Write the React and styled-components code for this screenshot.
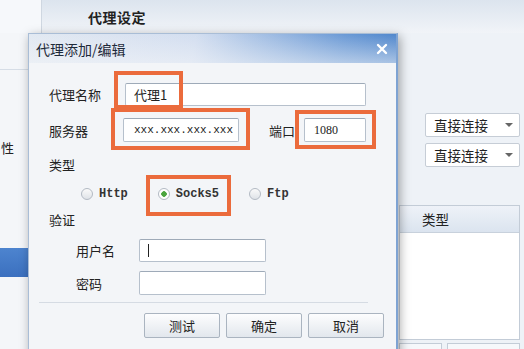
import styled, { createGlobalStyle } from 'styled-components'

const Global = createGlobalStyle`
  html, body { margin: 0; padding: 0; }
  body { font-family: "Noto Sans CJK SC", "Noto Sans", sans-serif; color: #222; }
`

const Page = styled.div`
  position: relative;
  width: 524px;
  height: 349px;
  overflow: hidden;
  background: #eef2f7;
  display: flex;
  flex-direction: column;
`

const Header = styled.header`
  height: 33px;
  flex: none;
  display: flex;
  align-items: center;
  background: linear-gradient(#dce4ee, #f1f4f8);
`

const HeaderCorner = styled.div`
  width: 42px;
  height: 100%;
  background: #f6f8fb;
  border-right: 1px solid #cfd7e1;
  box-sizing: border-box;
`

const HeaderTitle = styled.h1`
  margin: 0 0 0 46px;
  font-size: 14px;
  font-weight: 700;
  letter-spacing: 0.5px;
`

const Body = styled.div`
  flex: 1;
  display: flex;
`

const Sidebar = styled.nav`
  width: 28px;
  flex: none;
  background: #f4f6f9;
  border-right: 1px solid #c5ced9;
  overflow: hidden;
  display: flex;
  flex-direction: column;
`

const SideItem = styled.div`
  height: ${p => p.h}px;
  flex: none;
  display: flex;
  align-items: center;
  padding-left: 1px;
  font-size: 13px;
  white-space: nowrap;
  background: ${p => p.active ? 'linear-gradient(#4d84cf, #3b70bf)' : 'transparent'};
  border-bottom: ${p => p.line ? '1px solid #d6dde6' : 'none'};
  box-sizing: border-box;
`

const Main = styled.main`
  flex: 1;
  display: flex;
  justify-content: flex-end;
  padding-right: 4px;
`

const RightCol = styled.div`
  width: 121px;
  padding-top: 80px;
  display: flex;
  flex-direction: column;
`

const Select = styled.div`
  margin: 0 0 6px 26px;
  height: 24px;
  background: #fff;
  border: 1px solid #c6cdd6;
  border-radius: 2px;
  box-sizing: border-box;
  display: flex;
  align-items: center;
  justify-content: space-between;
  padding: 0 6px 0 8px;
  font-size: 13.5px;
  &::after {
    content: '';
    border-left: 4px solid transparent;
    border-right: 4px solid transparent;
    border-top: 4px solid #666;
  }
`

const Table = styled.div`
  margin-top: 32px;
  border: 1px solid #c3ccd7;
  background: #fff;
`

const TableHead = styled.div`
  height: 26px;
  background: linear-gradient(#eef2f8, #dbe4ef);
  border-bottom: 1px solid #c8d1dc;
  display: flex;
  align-items: center;
  padding-left: 22px;
  font-size: 13.5px;
`

const TableBody = styled.div`
  height: 106px;
`

const BottomBar = styled.div`
  display: flex;
  gap: 5px;
  margin-top: 3px;
`

const BottomBtn = styled.div`
  width: ${p => p.w}px;
  height: 20px;
  border: 1px solid #c3ccd7;
  background: #f6f8fb;
`

const Dialog = styled.section`
  position: absolute;
  left: 28px;
  top: 33px;
  width: 370px;
  height: 330px;
  background: #f3f5f8;
  border: 1px solid #a9bdd6;
  border-right: 2px solid #7ea3d3;
  box-sizing: border-box;
  box-shadow: 2px 3px 10px rgba(0, 0, 0, 0.35);
  display: flex;
  flex-direction: column;
`

const TitleBar = styled.div`
  height: 29px;
  flex: none;
  display: flex;
  align-items: center;
  justify-content: space-between;
  padding: 0 8px 0 7px;
  background:
    linear-gradient(rgba(255, 255, 255, 0) 0%, rgba(243, 245, 248, 0.55) 100%),
    linear-gradient(100deg, #e2e9f2 0%, #d3def0 45%, #6a99d5 85%, #4f86cc 100%);
  font-size: 14px;
  color: #1e2a3a;
`

const Close = styled.svg`
  width: 12px;
  height: 12px;
`

const Content = styled.div`
  padding: 20px 10px 0;
  display: flex;
  flex-direction: column;
`

const Row = styled.div`
  display: flex;
  align-items: center;
  height: ${p => p.h || 24}px;
  margin-top: ${p => p.mt || 0}px;
  padding-left: ${p => p.pl || 0}px;
`

const Label = styled.label`
  width: ${p => p.w}px;
  flex: none;
  padding-left: ${p => p.pl ?? 10}px;
  box-sizing: border-box;
  font-size: 13px;
  margin-left: ${p => p.ml || 0}px;
`

const Field = styled.div`
  position: relative;
  width: ${p => p.w}px;
  height: ${p => p.h || 23}px;
`

const Input = styled.div`
  width: 100%;
  height: 100%;
  box-sizing: border-box;
  background: #fff;
  border: 1px solid #b6c0cc;
  border-top-color: #9eaab8;
  border-radius: 2px;
  display: flex;
  align-items: center;
  padding-left: ${p => p.pl || 8}px;
  font-family: ${p => p.mono ? '"Liberation Mono", monospace' : p.serif ? '"Liberation Serif", serif' : '"Noto Sans CJK SC", sans-serif'};
  font-size: ${p => p.fs || 13}px;
  color: #222;
`

const Caret = styled.span`
  width: 1px;
  height: 13px;
  background: #222;
`

const Highlight = styled.div`
  position: absolute;
  left: ${p => p.l}px;
  top: ${p => p.t}px;
  width: ${p => p.w}px;
  height: ${p => p.h}px;
  border: 4px solid #eb6b3c;
  box-sizing: border-box;
  pointer-events: none;
`

const RadioGroup = styled.div`
  display: flex;
  align-items: center;
  gap: 30px;
`

const Radio = styled.div`
  position: relative;
  display: flex;
  align-items: center;
  gap: 6px;
  font-family: "Liberation Mono", monospace;
  font-weight: 700;
  font-size: 12px;
  color: #333;
`

const Dot = styled.span`
  width: 12px;
  height: 12px;
  border-radius: 50%;
  box-sizing: border-box;
  border: 1px solid #b3bac4;
  background: ${p => p.on
    ? 'radial-gradient(circle, #4ca53f 0 2.5px, #fff 3px)'
    : 'linear-gradient(#fafafa, #dfe3e8)'};
`

const Separator = styled.hr`
  margin: 7px 18px 0 0;
  border: none;
  border-top: 1px solid #d5dbe3;
`

const Buttons = styled.div`
  display: flex;
  justify-content: flex-end;
  gap: 6px;
  margin: 10px 2px 0 0;
`

const Button = styled.button`
  width: 76px;
  height: 25px;
  border: 1px solid #aab4c0;
  border-radius: 2px;
  background: linear-gradient(#fdfdfe, #e2e7ed);
  font-family: "Noto Sans CJK SC", sans-serif;
  font-size: 13px;
  color: #222;
  padding: 0;
`

export default function App() {
  return (
    <Page>
      <Global />
      <Header>
        <HeaderCorner />
        <HeaderTitle>代理设定</HeaderTitle>
      </Header>
      <Body>
        <Sidebar>
          <SideItem h={37} line />
          <SideItem h={154}>性</SideItem>
          <SideItem h={24} />
          <SideItem h={29} active />
        </Sidebar>
        <Main>
          <RightCol>
            <Select>直接连接</Select>
            <Select>直接连接</Select>
            <Table>
              <TableHead>类型</TableHead>
              <TableBody />
            </Table>
            <BottomBar>
              <BottomBtn w={42} />
              <BottomBtn w={74} />
            </BottomBar>
          </RightCol>
        </Main>
      </Body>

      <Dialog>
        <TitleBar>
          <span>代理添加/编辑</span>
          <Close viewBox="0 0 12 12">
            <path d="M2 2 L10 10 M10 2 L2 10" stroke="#fff" strokeWidth="2.4" strokeLinecap="round" />
          </Close>
        </TitleBar>
        <Content>
          <Row h={23}>
            <Label w={86}>代理名称</Label>
            <Field w={241}>
              <Input>代理1</Input>
              <Highlight l={-11} t={-12} w={69} h={38} />
            </Field>
          </Row>
          <Row mt={12}>
            <Label w={84}>服务器</Label>
            <Field w={116} h={24}>
              <Input mono fs={11} pl={10}>xxx.xxx.xxx.xxx</Input>
              <Highlight l={-12} t={-10} w={139} h={42} />
            </Field>
            <Label w={35} pl={0} ml={30}>端口</Label>
            <Field w={62} h={24}>
              <Input serif fs={12} pl={9}>1080</Input>
              <Highlight l={-9} t={-8} w={81} h={39} />
            </Field>
          </Row>
          <Row h={18} mt={13}><Label w={80}>类型</Label></Row>
          <Row h={18} mt={12} pl={42}>
            <RadioGroup>
              <Radio><Dot />Http</Radio>
              <Radio>
                <Dot on />Socks5
                <Highlight l={-12} t={-12} w={85} h={41} />
              </Radio>
              <Radio><Dot />Ftp</Radio>
            </RadioGroup>
          </Row>
          <Row h={18} mt={7}><Label w={80}>验证</Label></Row>
          <Row h={23} mt={11}>
            <Label w={100} pl={37}>用户名</Label>
            <Field w={127}>
              <Input><Caret /></Input>
            </Field>
          </Row>
          <Row h={24} mt={9}>
            <Label w={100} pl={37}>密码</Label>
            <Field w={127} h={24}>
              <Input />
            </Field>
          </Row>
          <Separator />
          <Buttons>
            <Button>测试</Button>
            <Button>确定</Button>
            <Button>取消</Button>
          </Buttons>
        </Content>
      </Dialog>
    </Page>
  )
}
